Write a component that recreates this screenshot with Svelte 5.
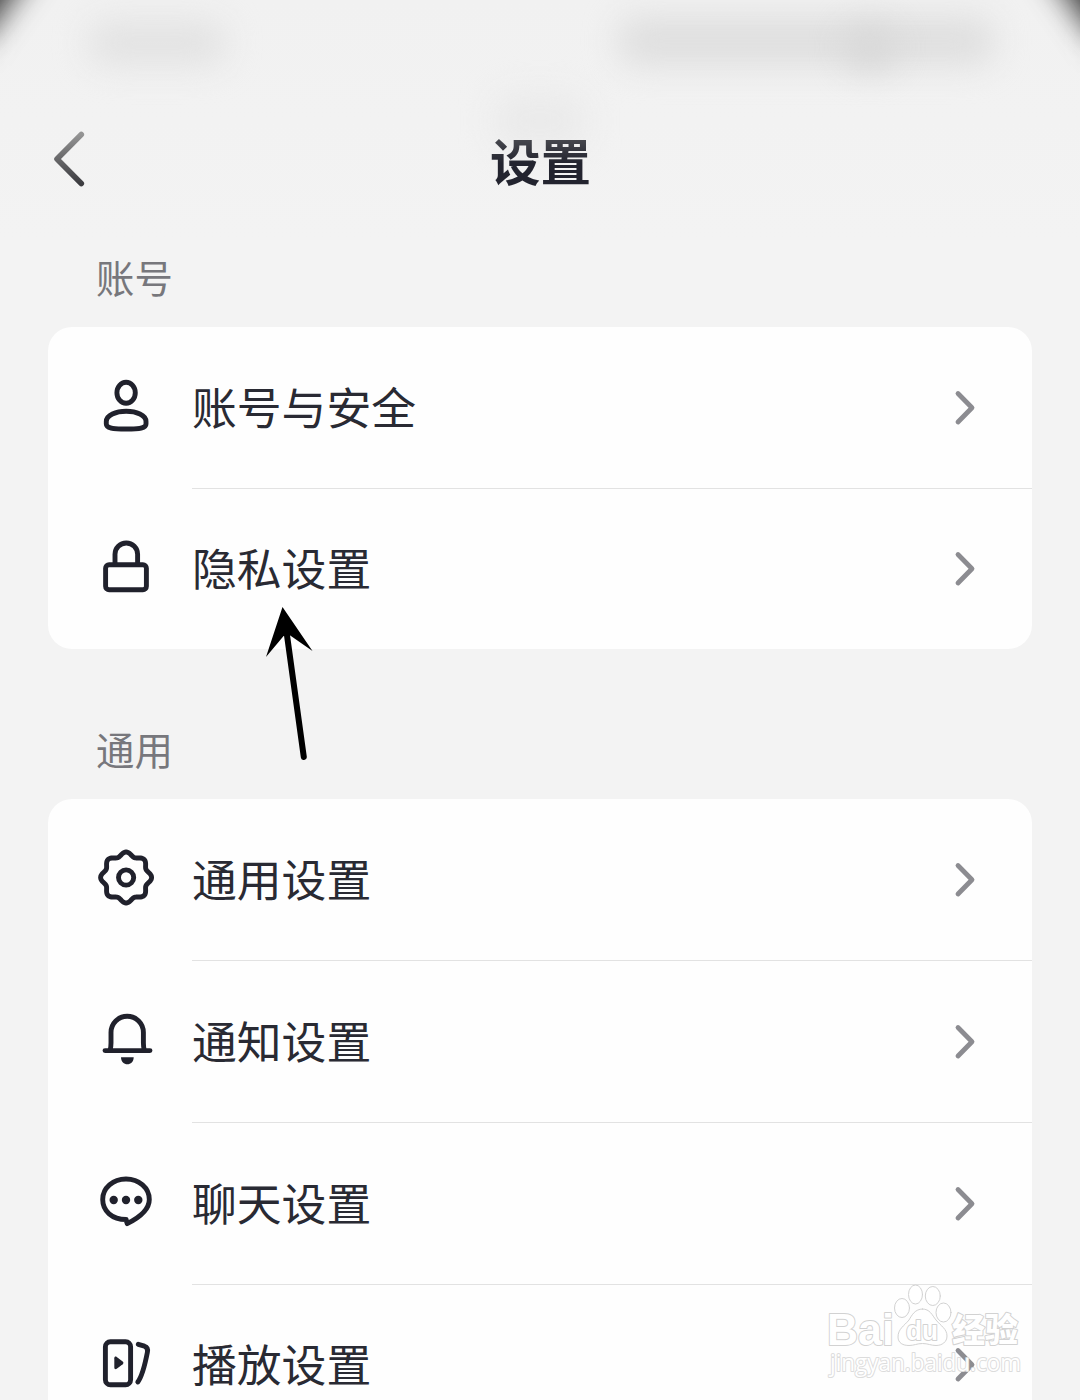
<script>
  const sections = [
    {
      title: '账号',
      items: [
        { icon: 'user', label: '账号与安全' },
        { icon: 'lock', label: '隐私设置' }
      ]
    },
    {
      title: '通用',
      items: [
        { icon: 'gear', label: '通用设置' },
        { icon: 'bell', label: '通知设置' },
        { icon: 'chat', label: '聊天设置' },
        { icon: 'play', label: '播放设置' }
      ]
    }
  ];

  // Wavy outline with eight soft lobes
  function gearPath(cx, cy, r, depth) {
    const points = [];
    for (let i = 0; i < 128; i++) {
      const a = (i / 128) * Math.PI * 2;
      const d = r + depth * Math.cos(a * 8);
      points.push(`${(cx + d * Math.cos(a)).toFixed(2)} ${(cy + d * Math.sin(a)).toFixed(2)}`);
    }
    return `M${points.join('L')}Z`;
  }
</script>

<main class="screen">
  <div class="status" aria-hidden="true">
    <span class="corner left"></span>
    <span class="corner right"></span>
    <span class="smudge time"></span>
    <span class="smudge signal"></span>
    <span class="smudge battery"></span>
    <span class="smudge notch"></span>
  </div>

  <header>
    <svg class="back" width="40" height="60" viewBox="0 0 40 60">
      <defs>
        <linearGradient id="fade" x1="0" y1="0" x2="0" y2="1">
          <stop offset="0" stop-color="#949494" />
          <stop offset="1" stop-color="#3c3c40" />
        </linearGradient>
      </defs>
      <path d="M33.3 5.5L9 30L33.3 54.5" stroke="url(#fade)" />
    </svg>
    <h1>设置</h1>
  </header>

  {#each sections as section}
    <section>
      <h2>{section.title}</h2>
      <ul>
        {#each section.items as item}
          <li>
            <svg class="icon" width="60" height="60" viewBox="0 0 60 60">
              {#if item.icon === 'user'}
                <ellipse cx="30.1" cy="15.8" rx="9.2" ry="10.5" />
                <path d="M10.3 44.5C10.3 38 20 34.3 30.2 34.3S50 38 50 44.5V47C50 51 44 52 30.2 52S10.3 51 10.3 47Z" />
              {:else if item.icon === 'lock'}
                <rect x="9.6" y="25.8" width="40.8" height="25" rx="3.5" />
                <path d="M19 25V15.3a11.3 11.3 0 0 1 22.6 0V25" />
              {:else if item.icon === 'gear'}
                <path d={gearPath(30.1, 28.5, 23.5, 2)} />
                <circle cx="30.1" cy="28.5" r="7.6" />
              {:else if item.icon === 'bell'}
                <path d="M9 39.6H54M14 39.3C14.8 37 15 35 15 32V21.5a16.2 16.2 0 0 1 32.4 0V32C47.4 35 47.6 37 48.4 39.3" />
                <path class="solid" d="M25 46.3h12.7c0 4.4-3 7-6.3 7s-6.4-2.6-6.4-7z" />
              {:else if item.icon === 'chat'}
                <path d="M30.2 46.5C16 46.5 6.7 38 6.7 26.5S17 6 30 6S53.3 15 53.3 26.5C53.3 36 44.5 44 31.2 50.6Q30.4 48.8 30.2 46.5Z" />
                <circle class="solid" cx="17.7" cy="27" r="4.2" />
                <circle class="solid" cx="30" cy="27" r="4.2" />
                <circle class="solid" cx="42.3" cy="27" r="4.2" />
              {:else}
                <rect x="9.4" y="6.7" width="25.2" height="43" rx="5" />
                <path class="solid" d="M18.3 23.2c0-1.5 1.3-2 2.4-1.2l6 4.6c1 .8 1 1.8 0 2.6l-6 4.6c-1.1.8-2.4.3-2.4-1.2z" />
                <path d="M42.3 9.3L48.5 11.2Q52.4 12.6 51.4 17.2C49.5 27 47 40 41.8 47" />
              {/if}
            </svg>
            <div class="entry">
              <span>{item.label}</span>
              <svg class="chevron" width="24" height="40" viewBox="0 0 24 40">
                <path d="M5 5.5L19 19.7L5 34" />
              </svg>
            </div>
          </li>
        {/each}
      </ul>
    </section>
  {/each}

  <svg class="pointer" width="60" height="160" viewBox="0 0 60 160">
    <path d="M22.5 7L6 57L23.6 36L29.5 35L52.5 51Z" />
    <path class="shaft" d="M26 28L43.8 157" />
  </svg>

  <svg class="watermark" width="210" height="110" viewBox="0 0 210 110">
    <g class="paw">
      <ellipse cx="82" cy="28" rx="7.5" ry="9.5" />
      <ellipse cx="95.5" cy="14.5" rx="7" ry="9.5" />
      <ellipse cx="112.8" cy="16" rx="7.5" ry="9.5" />
      <ellipse cx="123.5" cy="32.5" rx="7.5" ry="9.5" />
      <path d="M102.5 29C95 29 92 35 89 40C84 46 78 49 78 57C78 63 83 65.5 89 65.5C94 65.5 97 63.5 102.5 63.5S111 65.5 116 65.5C122 65.5 127 62 127 56C127 49 121 46 116 40C112 35 110 29 102.5 29Z" />
    </g>
    <text class="brand" x="7" y="65" font-size="45" textLength="67" lengthAdjust="spacingAndGlyphs">Bai</text>
    <text class="du" x="86" y="60" font-size="27" textLength="32" lengthAdjust="spacingAndGlyphs">du</text>
    <text class="zh" x="132" y="61.5" font-size="33">经验</text>
    <text class="url" x="10" y="90.5" font-size="24" textLength="191" lengthAdjust="spacingAndGlyphs">jingyan.baidu.com</text>
  </svg>
</main>

<style>
  :global(body) {
    margin: 0;
    background: #f3f3f3;
  }

  .screen {
    position: relative;
    width: 1080px;
    height: 1400px;
    overflow: hidden;
    background: linear-gradient(#f1f1f1, #f3f3f3 240px);
    font-family: "Noto Sans CJK SC", "Noto Sans", sans-serif;
    color: #292a33;
  }

  svg {
    flex: none;
    fill: none;
    stroke-linecap: round;
    stroke-linejoin: round;
  }

  /* Blurred remains of the phone's status bar */
  .status span {
    position: absolute;
  }

  .corner {
    top: -64px;
    width: 60px;
    height: 100px;
    background: #333;
    filter: blur(16px);
  }

  .corner.left {
    left: -47px;
    transform: rotate(35deg);
  }

  .corner.right {
    right: -47px;
    transform: rotate(-35deg);
  }

  .smudge {
    background: #e0e0e0;
    border-radius: 20px;
    filter: blur(16px);
  }

  .time {
    left: 88px;
    top: 20px;
    width: 138px;
    height: 46px;
    background: #e3e3e3;
  }

  .signal {
    left: 618px;
    top: 16px;
    width: 376px;
    height: 50px;
    background: #dfdfdf;
  }

  .battery {
    left: 845px;
    top: 24px;
    width: 50px;
    height: 46px;
    background: #d8d8d8;
  }

  .notch {
    left: 494px;
    top: 94px;
    width: 92px;
    height: 54px;
    background: #eaeaea;
  }

  header {
    position: relative;
    display: grid;
    grid-template-columns: 48px 1fr 48px;
    align-items: center;
    height: 90px;
    padding: 114px 48px 0;
  }

  .back {
    stroke-width: 5.6;
  }

  h1 {
    margin: -1px 0 0 1px;
    text-align: center;
    font-size: 50.5px;
    line-height: 60px;
    font-weight: 700;
    background: linear-gradient(#4a4b51 8px, #23242f 34px);
    background-clip: text;
    color: transparent;
  }

  section {
    padding: 0 48px;
  }

  h2 {
    margin: 0;
    padding: 44px 48px 23px;
    font-size: 38.4px;
    line-height: 56px;
    font-weight: 400;
    color: #77777c;
  }

  section + section h2 {
    padding-top: 71px;
  }

  ul {
    margin: 0;
    padding: 0;
    list-style: none;
    background: #fefefe;
    border-radius: 24px;
  }

  li {
    display: flex;
    height: 162px;
  }

  .icon {
    margin: 50px 36px 0 48px;
    stroke: #20212c;
    stroke-width: 4.9;
  }

  .icon .solid {
    fill: #20212c;
    stroke: none;
  }

  .entry {
    display: flex;
    flex: 1;
    align-items: center;
    justify-content: space-between;
    box-sizing: border-box;
    padding-right: 55px;
    border-bottom: 1px solid #e2e2e2;
    font-size: 44.8px;
    line-height: 66px;
  }

  .entry span {
    margin-top: -4px;
  }

  li:last-child {
    height: 160px;
  }

  li:last-child .entry {
    border-bottom: 0;
  }

  .chevron {
    stroke: #8c8c91;
    stroke-width: 4.8;
  }

  /* Hand-drawn hint towards the privacy row */
  .pointer {
    position: absolute;
    left: 260px;
    top: 600px;
    fill: #000;
  }

  .shaft {
    stroke: #000;
    stroke-width: 6;
  }

  .watermark {
    position: absolute;
    left: 820px;
    top: 1280px;
    fill: #fff;
    stroke: #d2d2d2;
    stroke-width: 1;
  }

  .watermark text {
    paint-order: stroke;
    stroke-width: 2;
  }

  .brand {
    font-family: "Liberation Sans", sans-serif;
    font-weight: 700;
  }

  .du {
    font-family: "Liberation Sans", sans-serif;
    font-weight: 700;
  }

  .zh {
    font-weight: 900;
  }

  .watermark .url {
    font-family: "Open Sans", sans-serif;
    stroke: #dcdcdc;
  }
</style>
